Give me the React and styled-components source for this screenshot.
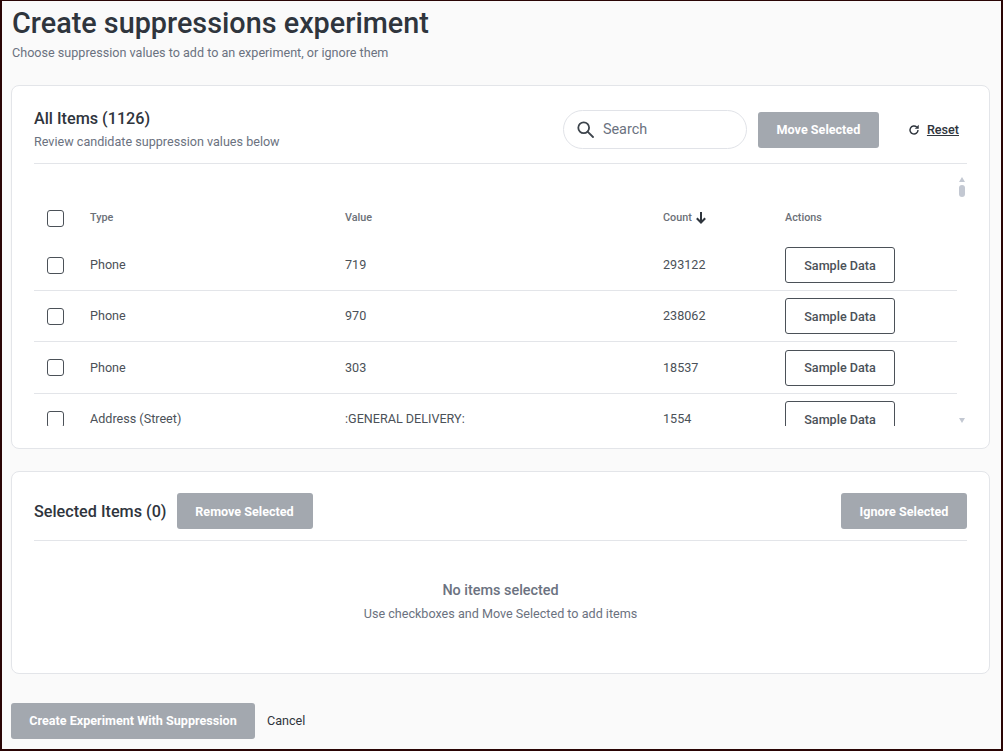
import React from "react";
import styled, { createGlobalStyle } from "styled-components";

const Global = createGlobalStyle`
  html, body { margin: 0; padding: 0; background: #fafafa; }
  * { box-sizing: border-box; }
  body { font-family: Roboto, "Liberation Sans", sans-serif; }
`;
const Page = styled.div`
  width: 1003px; height: 751px; overflow: hidden;
  border: 2px solid #2a0505; border-width: 1px 2px 2px 2px;
  background: #fafafa; padding: 0 11px 0 9px;
  display: flex; flex-direction: column;
`;
const Title = styled.h1`
  margin: 7px 0 0 1px; font-size: 28.8px; line-height: 30px; font-weight: 500; color: #2f353d;
`;
const Subtitle = styled.p`
  margin: 6px 0 0 1px; font-size: 12.6px; line-height: 18px; color: #6b7280;
`;
const Card = styled.section`
  background: #fff; border: 1px solid #e3e5e9; border-radius: 8px;
  padding: 0 22px; width: 979px; height: ${p => p.$h}px; margin-top: ${p => p.$mt}px;
  display: flex; flex-direction: column; flex: none;
`;
const TopBar = styled.div`
  height: 78px; flex: none; border-bottom: 1px solid #e3e5e9;
  display: flex; align-items: center; padding-top: 10px;
`;
const Heading = styled.div` flex: 1; `;
const CardTitle = styled.h2`
  margin: 0; font-size: 16.2px; line-height: 22px; font-weight: 500; color: #2f353d;
`;
const SelectedTitle = styled(CardTitle)`
  padding-top: 1px;
`;
const CardSub = styled.p`
  margin: 3px 0 0; font-size: 12.6px; line-height: 18px; color: #6b7280;
`;
const SearchBox = styled.div`
  width: 184px; height: 39px; border: 1px solid #e1e3e8; border-radius: 20px;
  display: flex; align-items: center; gap: 9px; padding-left: 13px;
  font-size: 14.4px; color: #6b7280; margin-right: 11px;
`;
const Solid = styled.button`
  height: 36px; width: ${p => p.$w}px; flex: none; border: 0; border-radius: 3px;
  background: #a3a8af; color: #fff; font: 700 12.6px Roboto, sans-serif; padding: 0;
`;
const CreateButton = styled(Solid)`
  padding-bottom: 2px;
`;
const ResetLink = styled.div`
  display: flex; align-items: center; gap: 7px; margin-left: 29px; margin-right: 8px;
  font-size: 12.6px; font-weight: 500; color: #2f353d;
  span { text-decoration: underline; }
`;
const TableWrap = styled.div`
  height: 262px; flex: none; display: flex; justify-content: space-between; overflow: hidden;
`;
const Table = styled.div`
  width: 923px; height: 262px; overflow: hidden; flex: none;
`;
const Row = styled.div`
  display: grid; grid-template-columns: 56px 255px 318px 122px 1fr; align-items: center;
  height: ${p => p.$h}px; padding-top: ${p => p.$pt || 0}px;
  border-bottom: ${p => (p.$line ? "1px solid #e3e5e9" : "0")};
  font-size: 12.6px; color: #4b5158;
`;
const HeadCell = styled.div`
  font-size: 10.8px; font-weight: 500; color: #6b7077; display: flex; align-items: center; gap: 3px;
  margin-bottom: 2px;
`;
const Cell = styled.div`
  margin-bottom: 1px;
`;
const Check = styled.span`
  width: 17px; height: 17px; margin-left: 13px; border: 1.3px solid #4b5158; border-radius: 3px;
  background: #fff; display: block;
`;
const Outline = styled.button`
  width: 110px; height: 36px; background: #fff; border: 1px solid #4b5158; border-radius: 3px;
  font: 500 12.6px Roboto, sans-serif; color: #4b5158; padding: 0;
`;
const Scrollbar = styled.div`
  width: 10px; flex: none; display: flex; flex-direction: column; align-items: flex-end;
  padding: 13px 2px 0 0;
`;
const Thumb = styled.div`
  width: 6px; height: 12px; border-radius: 3px; background: #c3c8d2; margin-top: 3px; margin-right: 0.5px;
`;
const Arrow = styled.div`
  width: 0; height: 0; border-left: 3.5px solid transparent; border-right: 3.5px solid transparent;
  ${p => (p.$down
    ? "border-top: 5px solid #c3c8d2; margin-top: 221px;"
    : "border-bottom: 5px solid #c3c8d2;")}
`;
const SelectedBar = styled.div`
  height: 69px; flex: none; border-bottom: 1px solid #e3e5e9;
  display: flex; align-items: center; gap: 10px; padding-top: 10px;
`;
const Spacer = styled.div` flex: 1; `;
const Empty = styled.div`
  text-align: center; padding-top: 40px;
`;
const EmptyTitle = styled.div`
  font-size: 14.4px; line-height: 20px; font-weight: 500; color: #6b7280;
`;
const EmptySub = styled.div`
  margin-top: 4px; font-size: 12.6px; line-height: 18px; color: #6b7280;
`;
const Footer = styled.div`
  display: flex; align-items: center; gap: 12px; margin-top: 29px;
`;
const Cancel = styled.div` font-size: 12.6px; color: #2f353d; margin-bottom: 2px; `;

const rows = [
  ["Phone", "719", "293122", 51],
  ["Phone", "970", "238062", 51],
  ["Phone", "303", "18537", 52],
  ["Address (Street)", ":GENERAL DELIVERY:", "1554", 50],
];

export default function App() {
  return (
    <Page>
      <Global />
      <Title>Create suppressions experiment</Title>
      <Subtitle>Choose suppression values to add to an experiment, or ignore them</Subtitle>
      <Card $h={364} $mt={23}>
        <TopBar>
          <Heading>
            <CardTitle>All Items (1126)</CardTitle>
            <CardSub>Review candidate suppression values below</CardSub>
          </Heading>
          <SearchBox>
            <svg width="17" height="17" viewBox="0 0 17 17" fill="none" stroke="#3d444c" strokeWidth="1.8">
              <circle cx="6.7" cy="6.7" r="5.4" />
              <path d="M10.6 10.6L16 16" strokeLinecap="round" />
            </svg>
            Search
          </SearchBox>
          <Solid $w={121}>Move Selected</Solid>
          <ResetLink>
            <svg width="12" height="12" viewBox="0 0 24 24" fill="none">
              <path d="M20 12a8 8 0 1 1-2.6-5.9" stroke="#2f353d" strokeWidth="2.8" />
              <path d="M21.5 1.5V9.5h-8z" fill="#2f353d" />
            </svg>
            <span>Reset</span>
          </ResetLink>
        </TopBar>
        <TableWrap>
          <Table>
            <Row $h={76} $pt={32}>
              <Check />
              <HeadCell>Type</HeadCell>
              <HeadCell>Value</HeadCell>
              <HeadCell>
                Count
                <svg width="12" height="13" viewBox="0 0 12 13" fill="none" stroke="#2f353d" strokeWidth="2">
                  <path d="M6 1v10.5M1.8 7.2L6 11.5l4.2-4.3" />
                </svg>
              </HeadCell>
              <HeadCell>Actions</HeadCell>
            </Row>
            {rows.map((r, i) => (
              <Row key={i} $h={r[3]} $line={i < 3}>
                <Check />
                <Cell>{r[0]}</Cell>
                <Cell>{r[1]}</Cell>
                <Cell>{r[2]}</Cell>
                <Outline>Sample Data</Outline>
              </Row>
            ))}
          </Table>
          <Scrollbar>
            <Arrow />
            <Thumb />
            <Arrow $down />
          </Scrollbar>
        </TableWrap>
      </Card>
      <Card $h={203} $mt={22}>
        <SelectedBar>
          <SelectedTitle>Selected Items (0)</SelectedTitle>
          <Solid $w={136}>Remove Selected</Solid>
          <Spacer />
          <Solid $w={126}>Ignore Selected</Solid>
        </SelectedBar>
        <Empty>
          <EmptyTitle>No items selected</EmptyTitle>
          <EmptySub>Use checkboxes and Move Selected to add items</EmptySub>
        </Empty>
      </Card>
      <Footer>
        <CreateButton $w={244}>Create Experiment With Suppression</CreateButton>
        <Cancel>Cancel</Cancel>
      </Footer>
    </Page>
  );
}
